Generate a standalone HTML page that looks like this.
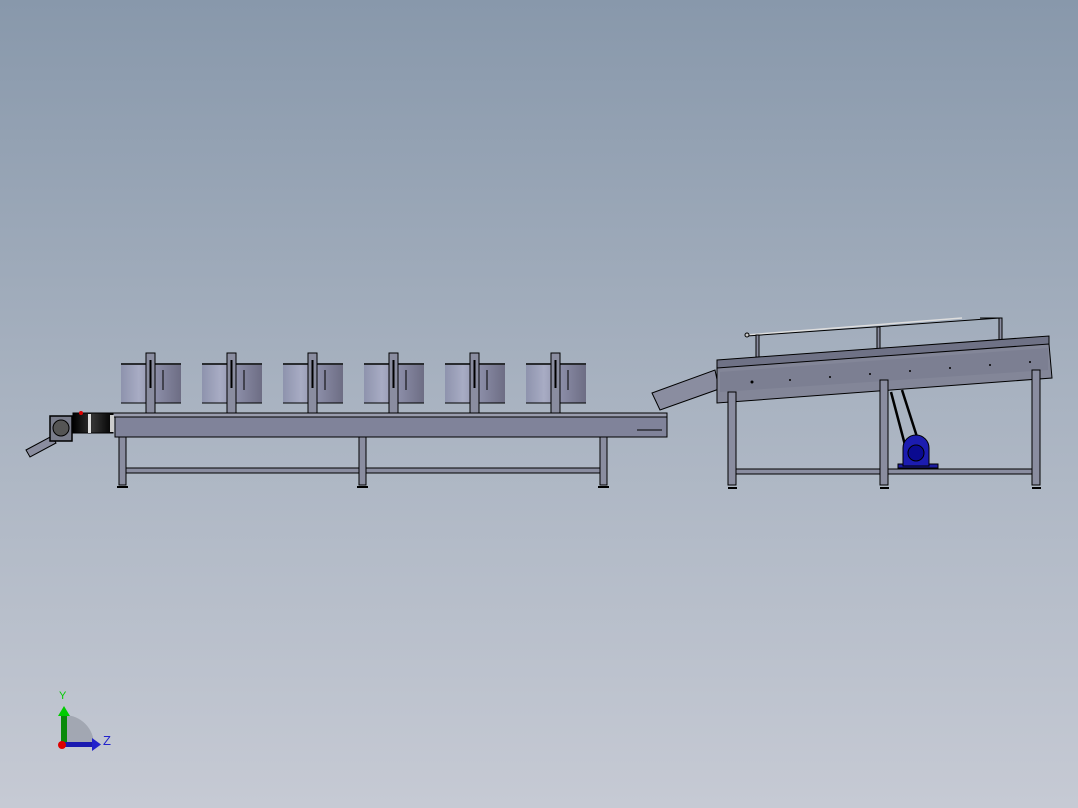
<!DOCTYPE html>
<html><head><meta charset="utf-8"><style>
html,body{margin:0;padding:0;width:1078px;height:808px;overflow:hidden}
body{background:linear-gradient(#8898ab 0%,#a9b3c1 50%,#c6cad4 100%)}
svg{position:absolute;left:0;top:0}
</style></head><body>
<svg width="1078" height="808" viewBox="0 0 1078 808" xmlns="http://www.w3.org/2000/svg">
<defs>
<linearGradient id="cyl" x1="0" x2="1">
<stop offset="0" stop-color="#8e93ad"/><stop offset="0.3" stop-color="#a8acc4"/><stop offset="0.6" stop-color="#8a8ca6"/><stop offset="1" stop-color="#6d6d84"/>
</linearGradient>
<linearGradient id="mot" x1="0" x2="1"><stop offset="0" stop-color="#000"/><stop offset="0.5" stop-color="#333"/><stop offset="1" stop-color="#000"/></linearGradient>
</defs>
<g stroke="#000" stroke-width="1">
<!-- left chute -->
<polygon points="26,450 52,436 56,443 30,457" fill="#8a8d9f"/>
<!-- cylinders -->
<g id="c">
<rect x="121" y="365" width="60" height="38" fill="url(#cyl)" stroke="none"/>
<line x1="121" y1="364" x2="181" y2="364" stroke-width="1.5"/>
<line x1="121" y1="403" x2="181" y2="403"/>
<rect x="146" y="353" width="9" height="60" fill="#8a8da0"/>
<line x1="150.5" y1="360" x2="150.5" y2="388" stroke-width="2"/>
<line x1="163" y1="370" x2="163" y2="390" stroke-width="1"/>
</g>
<use href="#c" x="81"/><use href="#c" x="162"/><use href="#c" x="243"/><use href="#c" x="324"/><use href="#c" x="405"/>
<!-- left conveyor body -->
<rect x="113" y="413" width="554" height="4" fill="#9a9dae"/>
<rect x="115" y="417" width="552" height="20" fill="#80839a"/>
<line x1="637" y1="430" x2="662" y2="430"/>
<!-- legs -->
<g fill="#8a8da0">
<rect x="119" y="437" width="7" height="48"/><rect x="359" y="437" width="7" height="48"/><rect x="600" y="437" width="7" height="48"/>
<rect x="126" y="468" width="233" height="5"/><rect x="366" y="468" width="234" height="5"/>
</g>
<g fill="#000" stroke="none"><rect x="117" y="486" width="11" height="2"/><rect x="357" y="486" width="11" height="2"/><rect x="598" y="486" width="11" height="2"/></g>
<!-- motor -->
<rect x="50" y="416" width="22" height="25" fill="#7a7d8c" stroke-width="1.5"/>
<circle cx="61" cy="428" r="8" fill="#555" stroke="#000"/>
<rect x="73" y="413" width="40" height="20" fill="url(#mot)"/>
<rect x="88" y="414" width="3" height="19" fill="#ddd" stroke="none"/>
<rect x="110" y="415" width="4" height="17" fill="#ccc" stroke="none"/>
<circle cx="81" cy="413" r="2" fill="#d00" stroke="none"/>
<!-- right chute -->
<polygon points="652,393 715,370 719,389 660,410" fill="#8a8da0"/>
<!-- rail -->
<line x1="747" y1="335" x2="962" y2="318" stroke="#ddd" stroke-width="1.5"/>
<line x1="747" y1="336" x2="1000" y2="318"/>
<circle cx="747" cy="335" r="2" fill="#ccc"/>
<g fill="#8a8da0"><rect x="756" y="335" width="3" height="22"/><rect x="877" y="327" width="3" height="22"/><rect x="999" y="318" width="3" height="22"/></g>
<line x1="980" y1="318" x2="1001" y2="318"/>
<!-- right conveyor -->
<polygon points="717,360 1049,336 1049,345 717,369" fill="#6f7286"/>
<polygon points="717,368 1049,344 1052,378 717,403" fill="#838698"/>
<polygon points="720,372 1048,348 1048,370 720,392" fill="#7c7f92" stroke="none"/>
<!-- legs right -->
<g fill="#8a8da0">
<rect x="728" y="392" width="8" height="93"/><rect x="880" y="380" width="8" height="105"/><rect x="1032" y="370" width="8" height="115"/>
<rect x="736" y="469" width="144" height="5"/><rect x="888" y="469" width="144" height="5"/>
</g>
<g fill="#000" stroke="none"><rect x="728" y="487" width="9" height="2"/><rect x="880" y="487" width="9" height="2"/><rect x="1032" y="487" width="9" height="2"/></g>
<!-- belts -->
<line x1="891" y1="392" x2="905" y2="445" stroke-width="2.5"/>
<line x1="902" y1="390" x2="918" y2="440" stroke-width="2.5"/>
<!-- blue motor -->
<rect x="898" y="464" width="40" height="4" fill="#1a1aa0"/>
<path d="M903,466 L903,448 A13,13 0 0 1 929,448 L929,466 Z" fill="#1c1cb0"/>
<circle cx="916" cy="453" r="8" fill="#0a0a90"/>
</g>
<!-- dots on right conveyor -->
<g fill="#000">
<circle cx="752" cy="382" r="1.5"/><circle cx="790" cy="380" r="1"/><circle cx="830" cy="377" r="1"/><circle cx="870" cy="374" r="1"/><circle cx="910" cy="371" r="1"/><circle cx="950" cy="368" r="1"/><circle cx="990" cy="365" r="1"/><circle cx="1030" cy="362" r="1"/>
</g>
<!-- axis triad -->
<path d="M64,745 L64,715 A30,30 0 0 1 94,745 Z" fill="#8e939f" opacity="0.6"/>
<rect x="61" y="714" width="6" height="31" fill="#0a8a0a"/>
<polygon points="58,716 64,706 70,716" fill="#0c0"/>
<rect x="63" y="742" width="30" height="5" fill="#1a1ab0"/>
<polygon points="92,738 101,744.5 92,751" fill="#22c"/>
<circle cx="62" cy="745" r="4" fill="#d00"/>
<text x="59" y="699" font-family="Liberation Sans,sans-serif" font-size="11" fill="#0c0">Y</text>
<text x="103" y="745" font-family="Liberation Sans,sans-serif" font-size="13" fill="#22c">Z</text>
</svg>
</body></html>
